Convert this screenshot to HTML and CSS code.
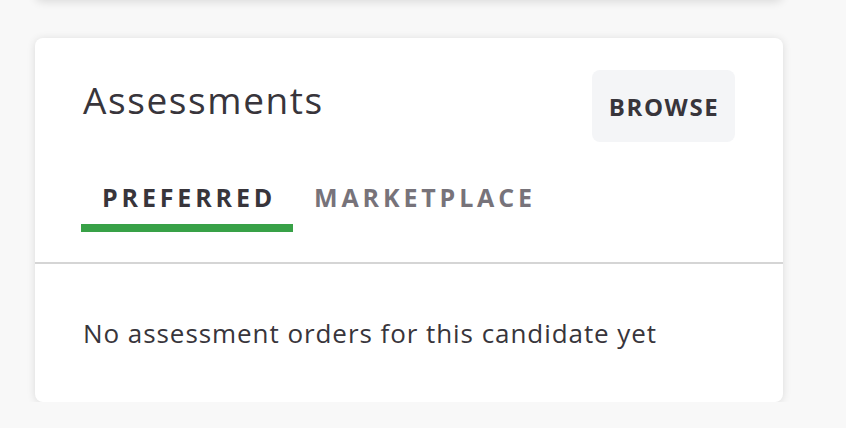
FILE: index.html
```html
<!DOCTYPE html>
<html>
<head>
<meta charset="utf-8">
<link rel="stylesheet" href="styles.css">
</head>
<body>
<div class="page">
  <div class="prev-card"></div>
  <section class="card">
    <div class="card-header">
      <h2 class="title">Assessments</h2>
      <button class="btn">BROWSE</button>
    </div>
    <nav class="tabs">
      <div class="tab active">PREFERRED</div>
      <div class="tab">MARKETPLACE</div>
    </nav>
    <div class="card-body">
      <p class="empty">No assessment orders for this candidate yet</p>
    </div>
  </section>
</div>
</body>
</html>
```

FILE: styles.css
```css
html, body {
  margin: 0;
  padding: 0;
  background: #f8f8f8;
  font-family: "Open Sans", "Liberation Sans", sans-serif;
  color: #38353b;
  overflow: hidden;
}

.page {
  width: 748px;
  padding: 0 63px 0 35px;
}

.prev-card {
  height: 40px;
  margin-top: -40px;
  background: #fff;
  border-radius: 8px;
  box-shadow: 0 2px 10px rgba(0, 0, 0, 0.12);
}

.card {
  margin-top: 38px;
  background: #fff;
  border-radius: 8px;
  box-shadow: 0 1px 8px rgba(0, 0, 0, 0.12);
}

.card-header {
  display: flex;
  justify-content: space-between;
  align-items: flex-start;
  padding: 32px 48px 0 48px;
}

.title {
  margin: 5px 0 0 0;
  font-size: 37px;
  font-weight: 400;
  line-height: 49px;
  letter-spacing: 1.6px;
  color: #38353b;
}

.btn {
  width: 143px;
  height: 72px;
  border: 0;
  border-radius: 8px;
  background: #f4f5f7;
  font-family: "Open Sans", "Liberation Sans", sans-serif;
  font-size: 24px;
  font-weight: 700;
  letter-spacing: 1.6px;
  color: #38353b;
  padding: 0 0 0 1px;
}

.tabs {
  display: flex;
  margin-top: 38px;
  padding: 0 46px;
  border-bottom: 2px solid #d5d5d5;
  padding-bottom: 30px;
}

.tab {
  padding: 0 17px 9px 21px;
  font-size: 25px;
  font-weight: 700;
  letter-spacing: 3.85px;
  line-height: 35px;
  color: #77737a;
  border-bottom: 8px solid transparent;
}

.tab.active {
  color: #38353b;
  border-bottom-color: #38a147;
}

.card-body {
  padding: 52px 48px 52px 48px;
}

.empty {
  margin: 0;
  font-size: 26px;
  line-height: 34px;
  letter-spacing: 0.94px;
  color: #38353b;
}
```
